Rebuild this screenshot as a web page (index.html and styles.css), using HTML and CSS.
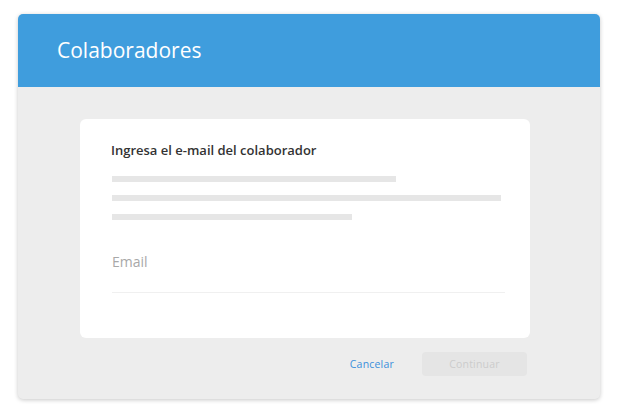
FILE: index.html
```html
<!DOCTYPE html>
<html>
<head>
<link rel="stylesheet" href="styles.css">
</head>
<body>
    <div class="page">
        <div class="modal">
            <div class="modal-header">
                <h1 class="modal-title">Colaboradores</h1>
            </div>
            <div class="modal-body">
                <div class="card">
                    <h2 class="card-title">Ingresa el e-mail del colaborador</h2>
                    <div class="placeholder-lines">
                        <span class="line line-1"></span>
                        <span class="line line-2"></span>
                        <span class="line line-3"></span>
                    </div>
                    <div class="field">
                        <input type="text" class="field-input" placeholder="Email" />
                    </div>
                </div>
                <div class="actions">
                    <button class="btn-link">Cancelar</button>
                    <button class="btn-primary" disabled>Continuar</button>
                </div>
            </div>
        </div>
    </div>
</body>
</html>
```

FILE: styles.css
```css
body {
    margin: 0;
    background-color: #FFFFFF;
    font-family: "Open Sans", Lato, sans-serif;
}

.page {
    padding: 14px 18px 15px 18px;
}

.modal {
    width: 582px;
    height: 385px;
    background-color: #EDEDED;
    border-radius: 5px;
    overflow: hidden;
    box-shadow: 0px 1px 4px rgba(0, 0, 0, 0.22);
}

.modal-header {
    height: 73px;
    background-color: #3F9DDD;
    display: flex;
    align-items: center;
    padding-left: 39px;
    padding-bottom: 2px;
    box-sizing: border-box;
}

.modal-title {
    margin: 0;
    color: #FFFFFF;
    font-size: 21px;
    font-weight: 400;
}

.modal-body {
    padding: 32px 70px 0 62px;
}

.card {
    height: 219px;
    box-sizing: border-box;
    background-color: #FFFFFF;
    border-radius: 6px;
    padding: 23px 25px 0 31px;
}

.card-title {
    margin: 0;
    font-size: 13px;
    line-height: 17px;
    font-weight: 600;
    color: #333333;
}

.placeholder-lines {
    display: flex;
    flex-direction: column;
    gap: 13px;
    margin-top: 17px;
    padding-left: 1px;
}

.line {
    display: block;
    height: 6px;
    background-color: #E6E6E6;
}

.line-1 { width: 284px; }
.line-2 { width: 389px; }
.line-3 { width: 240px; }

.field {
    margin-top: 32px;
    margin-left: 1px;
    width: 393px;
    border-bottom: 1px solid #F0F0F0;
}

.field-input {
    display: block;
    width: 100%;
    height: 40px;
    box-sizing: border-box;
    padding: 0 0 22px 0;
    border: none;
    outline: none;
    font-family: inherit;
    font-size: 14px;
    color: #333333;
    background: transparent;
}

.field-input::placeholder {
    color: #A8A8A8;
}

.actions {
    display: flex;
    justify-content: flex-end;
    align-items: center;
    gap: 28px;
    margin-top: 14px;
    margin-right: 3px;
}

.btn-link {
    background: none;
    border: none;
    padding: 0;
    font-family: inherit;
    font-size: 10.5px;
    letter-spacing: 0.2px;
    color: #3B8FDB;
    cursor: pointer;
}

.btn-primary {
    width: 105px;
    height: 24px;
    border: none;
    border-radius: 4px;
    background-color: #E5E5E5;
    color: #CCCCCC;
    font-family: inherit;
    font-size: 10.5px;
    letter-spacing: 0.2px;
}
```
